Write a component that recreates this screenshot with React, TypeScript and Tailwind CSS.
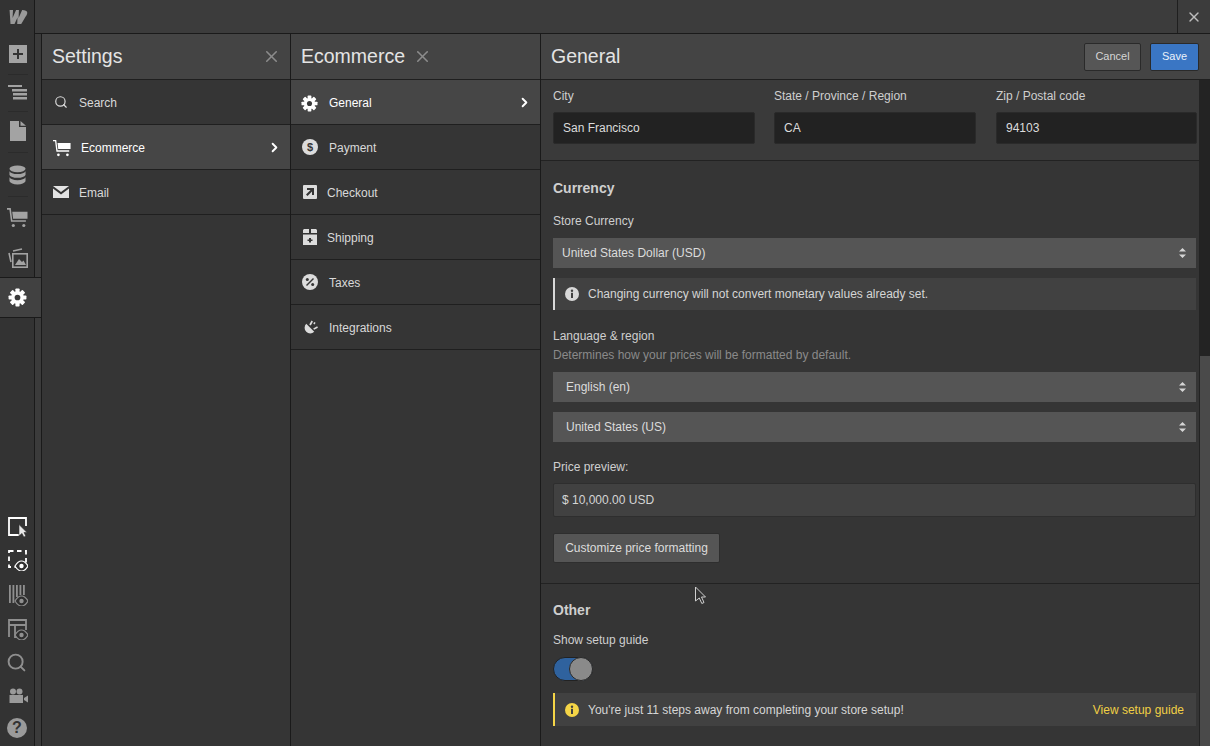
import React from 'react';
import { Search, ChevronRight, X } from 'lucide-react';

const FONT = { fontFamily: '"Liberation Sans", Arial, sans-serif' };

function Gear({ size = 20, color = '#fff' }: { size?: number; color?: string }) {
  const teeth = [0, 45, 90, 135, 180, 225, 270, 315];
  return (
    <svg width={size} height={size} viewBox="0 0 20 20">
      {teeth.map((a) => (
        <rect key={a} x="7.8" y="0.6" width="4.4" height="5" rx="0.8" fill={color} transform={`rotate(${a} 10 10)`} />
      ))}
      <circle cx="10" cy="10" r="6.6" fill={color} />
      <circle cx="10" cy="10" r="3" fill="#3a3a3a" />
    </svg>
  );
}

function Cart({ size = 20, color = '#fff' }: { size?: number; color?: string }) {
  return (
    <svg width={size} height={size} viewBox="0 0 20 20" fill={color}>
      <path d="M0 1h3.6l1.5 11.5H18v1.6H3.8L2.3 2.6H0z" />
      <path d="M5 4.5h14.5v6.6H5.8z" />
      <circle cx="6" cy="17.6" r="1.5" />
      <circle cx="16" cy="17.6" r="1.5" />
    </svg>
  );
}

function Eye({ x, y }: { x: number; y: number }) {
  return (
    <g transform={`translate(${x} ${y})`}>
      <path d="M0 5c2-3.4 4.2-5 6.5-5S11 1.600 13 5c-2 3.400-4.200 5-6.500 5S2 8.400 0 5z" fill="#2f2f2f" stroke="currentColor" strokeWidth="1.200" />
      <circle cx="6.500" cy="5" r="2.200" fill="currentColor" />
    </g>
  );
}

function Divider() {
  return <div className="mt-[11px] h-px w-[20px] bg-[#2b2b2b]" />;
}

function RailIcons() {
  return (
    <div className="flex flex-col items-center pl-[1px]">
      <svg width="21" height="14" viewBox="0 0 22 15" className="mt-[10px] text-[#9a9a9a]" fill="currentColor">
        <path d="M2.500 0h3.700l-.5 8.500L9.500 0h3l-.3 8.500L16 0c3 0 5.500 1 5.500 3 0 2-1.500 3.500-3 6L15 15h-4.300l.3-7-3.200 7H3.500z" />
      </svg>
      <svg width="18" height="18" viewBox="0 0 18 18" className="mt-[21px]">
        <rect width="18" height="18" fill="#a3a3a3" />
        <path d="M8 4h2v4h4v2h-4v4H8v-4H4V8h4z" fill="#333" />
      </svg>
      <Divider />
      <svg width="20" height="15" viewBox="0 0 20 15" className="mt-[10px]" fill="#a3a3a3">
        <rect x="0" y="0" width="14" height="2" />
        <rect x="4" y="4" width="15" height="2.500" />
        <rect x="5" y="8" width="14" height="2.500" />
        <rect x="5" y="12" width="14" height="2.500" />
      </svg>
      <Divider />
      <svg width="16" height="20" viewBox="0 0 16 20" className="mt-[9px]" fill="#a3a3a3">
        <path d="M0 0h9v6h7v14H0zM10.500 0L16 4.800h-5.500z" />
      </svg>
      <Divider />
      <svg width="17" height="20" viewBox="0 0 18 20" className="mt-[12px]" fill="#a3a3a3">
        <ellipse cx="9" cy="3.500" rx="8.500" ry="3.500" />
        <path d="M.5 6c1 1.800 4 3 8.500 3s7.500-1.200 8.500-3v4c-1 2-4 3-8.500 3S1.500 12 .5 10z" />
        <path d="M.5 12.500c1 1.800 4 3 8.500 3s7.500-1.200 8.500-3v4c-1 2-4 3.500-8.500 3.500S1.500 18.500.5 16.500z" />
      </svg>
      <Divider />
      <div className="mt-[10px] h-[21px]">
        <Cart size={21} color="#a3a3a3" />
      </div>
      <svg width="20" height="20" viewBox="0 0 20 20" className="mt-[20px]" fill="none">
        <path d="M5 3L14 1M1 5l2 9" stroke="#a3a3a3" strokeWidth="1.600" />
        <rect x="4.800" y="5.800" width="14.400" height="13.400" stroke="#a3a3a3" strokeWidth="1.600" />
        <path d="M7 17l4-6 3 3 1.500-1.500L18 17z" fill="#a3a3a3" />
      </svg>
    </div>
  );
}

function BottomIcons() {
  return (
    <div className="flex flex-col items-center">
      <svg width="22" height="21" viewBox="0 0 22 21">
        <path d="M13 19H3V2h17v8" fill="none" stroke="#fff" strokeWidth="1.800" />
        <path d="M13 8.500l8 8h-3l1.800 3.600-2 1-1.800-3.700-3 2.500z" fill="#e8e8e8" stroke="#333" strokeWidth=".6" />
      </svg>
      <svg width="22" height="21" viewBox="0 0 22 21" className="mt-[13px] text-white">
        <rect x="3" y="1" width="17" height="16" fill="none" stroke="currentColor" strokeWidth="1.800" strokeDasharray="4.500 3.500" />
        <Eye x={9} y={11} />
      </svg>
      <svg width="22" height="21" viewBox="0 0 22 21" className="mt-[14px] text-[#8f8f8f]" fill="currentColor">
        <rect x="3" y="0" width="1.800" height="18" />
        <rect x="6.500" y="0" width="1.800" height="18" />
        <rect x="10" y="0" width="1.800" height="12" />
        <rect x="13.500" y="0" width="1.800" height="10" />
        <rect x="17" y="0" width="1.800" height="10" />
        <Eye x={9} y={11} />
      </svg>
      <svg width="22" height="21" viewBox="0 0 22 21" className="mt-[13px] text-[#8f8f8f]" fill="none">
        <path d="M3 18V1h17v10M3 6h17M9 6v12h2" stroke="currentColor" strokeWidth="1.800" />
        <Eye x={9} y={11} />
      </svg>
      <Search size={21} strokeWidth={2.2} className="mt-[12px] mr-[1px] text-[#8f8f8f]" />
      <svg width="21" height="16" viewBox="0 0 20 16" className="mt-[15px] ml-[2px]" fill="#9a9a9a">
        <circle cx="4.500" cy="3.500" r="3" />
        <circle cx="11" cy="3.500" r="3" />
        <rect x="1" y="7" width="13.500" height="8" />
        <path d="M15.500 10l4-2.500v7l-4-2.500z" />
      </svg>
      <div className="mt-[14px] flex h-5 w-5 items-center justify-center rounded-full bg-[#9a9a9a] text-[16px] font-bold text-[#333]">?</div>
    </div>
  );
}

function Row({ icon, label, active, iconBox }: { icon: React.ReactNode; label: string; active?: boolean; iconBox: string }) {
  return (
    <div className={`flex h-[45px] items-center border-b border-[#1f1f1f] pt-[2px] text-[12px] ${active ? 'bg-[#464646] text-white' : 'bg-[#353535] text-[#d9d9d9]'}`}>
      <div className={`flex shrink-0 justify-center ${iconBox}`}>{icon}</div>
      <span className="flex-1">{label}</span>
      {active && <ChevronRight size={15} strokeWidth={3} className="mr-[8px] mb-[2px] text-white" />}
    </div>
  );
}

function Select({ label, pad }: { label: string; pad: string }) {
  return (
    <div className={`flex h-[30px] items-center justify-between bg-[#555] pr-[10px] text-[12px] text-[#dcdcdc] ${pad}`}>
      <span>{label}</span>
      <svg width="7" height="10" viewBox="0 0 7 10" fill="#d5d5d5">
        <path d="M3.500 0L7 3.600H0zM3.500 10L0 6.400h7z" />
      </svg>
    </div>
  );
}

function Field({ label, value, box }: { label: string; value: string; box: string }) {
  return (
    <div className={box}>
      <div className="h-[32px] pt-[9px] text-[12px] leading-[14px] text-[#cfcfcf]">{label}</div>
      <div className="flex h-[32px] items-center rounded-[2px] border border-[#2a2a2a] bg-[#222] pl-[9px] text-[12px] text-[#dcdcdc]">{value}</div>
    </div>
  );
}

function Info({ color }: { color: string }) {
  return (
    <svg width="14" height="14" viewBox="0 0 14 14" className="shrink-0">
      <circle cx="7" cy="7" r="7" fill={color} />
      <rect x="6" y="5.800" width="2" height="5.200" fill="#414141" />
      <circle cx="7" cy="3.800" r="1.200" fill="#414141" />
    </svg>
  );
}

export default function App() {
  return (
    <div className="flex h-[746px] w-[1210px] overflow-hidden bg-[#3b3b3b]" style={FONT}>
      {/* left rail */}
      <div className="flex w-[35px] shrink-0 flex-col justify-between border-r border-[#1a1a1a] bg-[#333] pb-[8px]">
        <div className="relative">
          <RailIcons />
          <div className="absolute left-0 top-[277px] flex h-[41px] w-[41px] items-center justify-center border-y border-[#1a1a1a] bg-[#414141] pr-[6px]">
            <Gear size={19} />
          </div>
        </div>
        <BottomIcons />
      </div>

      <div className="flex min-w-0 flex-1 flex-col">
        {/* top bar */}
        <div className="flex h-[34px] shrink-0 justify-end border-b border-[#1a1a1a] bg-[#3c3c3c]">
          <div className="flex w-[33px] items-center justify-center border-l border-[#1f1f1f]">
            <X size={16} strokeWidth={2} className="text-[#bdbdbd]" />
          </div>
        </div>

        <div className="flex min-h-0 flex-1 pl-[6px]">
          {/* settings panel */}
          <div className="w-[250px] shrink-0 border-r border-[#1a1a1a] border-l border-l-[#1a1a1a] bg-[#353535]">
            <div className="flex h-[46px] items-center justify-between border-b border-[#1f1f1f] bg-[#444] pl-[10px] pr-[9px] text-[19.5px] text-[#e4e4e4]">
              <span className="pt-[1px]">Settings</span>
              <X size={19} strokeWidth={2} className="text-[#8c8c8c]" />
            </div>
            <Row label="Search" iconBox="w-[37px]" icon={<Search size={14} strokeWidth={2} className="text-[#dedede] mb-[2px]" />} />
            <Row label="Ecommerce" active iconBox="w-[39px]" icon={<Cart size={18} />} />
            <Row
              label="Email"
              iconBox="w-[37px]"
              icon={
                <svg width="16" height="12" viewBox="0 0 16 12" fill="#e3e3e3" className="mb-[2px]">
                  <path d="M0 0h16L8 6zM0 2.500l8 6 8-6V12H0z" />
                </svg>
              }
            />
          </div>

          {/* ecommerce panel */}
          <div className="w-[250px] shrink-0 border-r border-[#1a1a1a] bg-[#353535]">
            <div className="flex h-[46px] items-center border-b border-[#1f1f1f] bg-[#444] pl-[10px] text-[19.5px] text-[#e4e4e4]">
              <span className="pt-[1px]">Ecommerce</span>
              <X size={19} strokeWidth={2} className="ml-[8px] text-[#8c8c8c]" />
            </div>
            <Row label="General" active iconBox="w-[38px] pr-[1px]" icon={<Gear size={17} />} />
            <Row
              label="Payment"
              iconBox="w-[38px]"
              icon={
                <svg width="16" height="16" viewBox="0 0 16 16" className="mb-[2px]">
                  <circle cx="8" cy="8" r="8" fill="#dcdcdc" />
                  <text x="8" y="12" textAnchor="middle" fontSize="11" fontWeight="700" fill="#353535">$</text>
                </svg>
              }
            />
            <Row
              label="Checkout"
              iconBox="w-[36px] pl-[2px]"
              icon={
                <svg width="14" height="14" viewBox="0 0 14 14" className="mb-[2px]">
                  <rect width="14" height="14" rx="1" fill="#dcdcdc" />
                  <path d="M4 3h7v7H9V6.500L4.500 11 3 9.500 7.500 5H4z" fill="#353535" />
                </svg>
              }
            />
            <Row
              label="Shipping"
              iconBox="w-[36px] pl-[2px]"
              icon={
                <svg width="14" height="16" viewBox="0 0 14 16" fill="#dcdcdc" className="mb-[2px]">
                  <path d="M1 0h5v4H0V1zM8 0h5l1 1v3H8zM0 5.500h14V16H0z" />
                  <path d="M6 9h2v1.500h1.500v1.500H8v1.500H6V12H4.500v-1.500H6z" fill="#353535" />
                </svg>
              }
            />
            <Row
              label="Taxes"
              iconBox="w-[38px]"
              icon={
                <svg width="16" height="16" viewBox="0 0 16 16" className="mb-[2px]">
                  <circle cx="8" cy="8" r="8" fill="#dcdcdc" />
                  <circle cx="5.300" cy="5.500" r="1.500" fill="#353535" />
                  <circle cx="10.700" cy="10.500" r="1.500" fill="#353535" />
                  <path d="M11 4l1 1-7 7-1-1z" fill="#353535" />
                </svg>
              }
            />
            <Row
              label="Integrations"
              iconBox="w-[38px]"
              icon={
                <svg width="17" height="17" viewBox="0 0 16 16" fill="#dcdcdc" className="mb-[2px]">
                  <path d="M4 4.500L11.500 12A5.300 5.300 0 0 1 4 4.500z" />
                  <path d="M6.800 5.200L9 1.500l1.300.8-2 3.800zM10.500 8.900l3.800-2 .7 1.300-3.600 1.800zM11.500 2.800l1.300.8-.9 1.500-1.300-.8z" />
                </svg>
              }
            />
          </div>

          {/* general panel */}
          <div className="flex min-w-0 flex-1 flex-col">
            <div className="flex h-[46px] shrink-0 items-center justify-between border-b border-[#1f1f1f] bg-[#444] pl-[10px] pr-[11px]">
              <span className="pt-[1px] text-[19.5px] text-[#e4e4e4]">General</span>
              <div className="flex gap-[9px] text-[11px]">
                <div className="flex h-[28px] w-[57px] items-center justify-center rounded-[2px] border border-[#2a2a2a] bg-[#565656] text-[#d5d5d5]">Cancel</div>
                <div className="flex h-[28px] w-[49px] items-center justify-center rounded-[2px] border border-[#2a2a2a] bg-[#3a76c4] text-[#eaf1fa]">Save</div>
              </div>
            </div>

            <div className="flex min-h-0 flex-1">
              <div className="min-w-0 flex-1 overflow-hidden bg-[#353535]">
                <div className="border-b border-[#222] bg-[#3a3a3a] pb-[16px] pl-[12px] pr-[2px]">
                  <div className="flex">
                    <Field box="w-[221px] pr-[19px]" label="City" value="San Francisco" />
                    <Field box="w-[222px] pr-[20px]" label="State / Province / Region" value="CA" />
                    <Field box="flex-1" label="Zip / Postal code" value="94103" />
                  </div>
                </div>

                <div className="border-b border-[#222] pb-[20px] pl-[12px] pr-[3px] pt-[19px]">
                  <div className="text-[14px] font-bold leading-[16px] text-[#cfcfcf]">Currency</div>
                  <div className="mt-[18px] text-[12px] leading-[14px] text-[#cfcfcf]">Store Currency</div>
                  <div className="mt-[10px]">
                    <Select label="United States Dollar (USD)" pad="pl-[9px]" />
                  </div>
                  <div className="mt-[10px] flex h-[32px] items-center gap-[9px] border-l-2 border-[#d8d8d8] bg-[#414141] pl-[10px] text-[12px] text-[#d5d5d5]">
                    <Info color="#d8d8d8" />
                    Changing currency will not convert monetary values already set.
                  </div>
                  <div className="mt-[19px] text-[12px] leading-[14px] text-[#cfcfcf]">Language &amp; region</div>
                  <div className="mt-[5px] text-[12px] leading-[14px] text-[#8a8a8a]">Determines how your prices will be formatted by default.</div>
                  <div className="mt-[10px]">
                    <Select label="English (en)" pad="pl-[13px]" />
                  </div>
                  <div className="mt-[10px]">
                    <Select label="United States (US)" pad="pl-[13px]" />
                  </div>
                  <div className="mt-[18px] text-[12px] leading-[14px] text-[#cfcfcf]">Price preview:</div>
                  <div className="mt-[9px] flex h-[34px] items-center rounded-[2px] border border-[#2e2e2e] bg-[#414141] pl-[8px] text-[12px] text-[#d5d5d5]">$ 10,000.00 USD</div>
                  <div className="mt-[16px] flex h-[30px] w-[167px] items-center justify-center rounded-[2px] border border-[#2e2e2e] bg-[#555] text-[12px] text-[#dcdcdc]">Customize price formatting</div>
                </div>

                <div className="pl-[12px] pr-[3px] pt-[18px]">
                  <div className="text-[14px] font-bold leading-[16px] text-[#cfcfcf]">Other</div>
                  <div className="mt-[15px] text-[12px] leading-[14px] text-[#cfcfcf]">Show setup guide</div>
                  <div className="relative mt-[10px] h-[24px] w-[40px] rounded-full border border-[#222] bg-[#2f629e]">
                    <div className="absolute right-[-1px] top-[-1px] h-[24px] w-[24px] rounded-full border border-[#2a2a2a] bg-[#8a8a8a]" />
                  </div>
                  <div className="mt-[12px] flex h-[33px] items-center gap-[9px] border-l-2 border-[#f5d547] bg-[#414141] pl-[10px] pr-[12px] text-[12px] text-[#d5d5d5]">
                    <Info color="#f5d547" />
                    <span className="flex-1">You&apos;re just 11 steps away from completing your store setup!</span>
                    <span className="text-[#f0cf45]">View setup guide</span>
                  </div>
                </div>
              </div>

              {/* scrollbar */}
              <div className="flex w-[11px] shrink-0 flex-col bg-[#232323] pt-[276px] pl-[1px]">
                <div className="h-full w-full bg-[#4a4a4a]" />
              </div>
            </div>
          </div>
        </div>
      </div>

      {/* cursor */}
      <svg width="14" height="20" viewBox="0 0 14 20" className="absolute left-[694px] top-[586px]">
        <path d="M1.500 1l10 10H7.500l2.500 5.500-2.200 1L5.300 12 1.500 15z" fill="#333" stroke="#cfcfcf" strokeWidth="1" />
      </svg>
    </div>
  );
}
